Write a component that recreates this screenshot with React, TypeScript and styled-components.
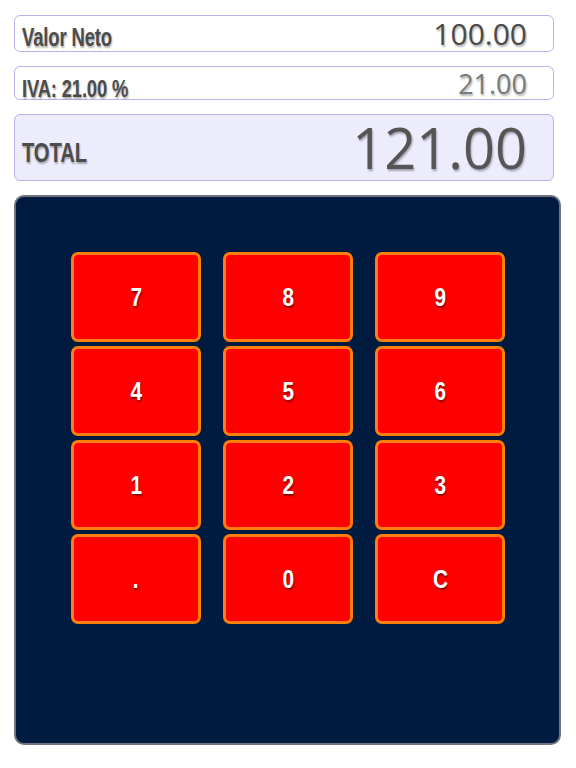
import styled, { createGlobalStyle } from "styled-components";

const GlobalStyle = createGlobalStyle`
  html, body {
    margin: 0;
    padding: 0;
    background: #ffffff;
  }
  body {
    font-family: "Liberation Sans", Arial, sans-serif;
  }
`;

const Page = styled.div`
  width: 576px;
  height: 768px;
  box-sizing: border-box;
  padding: 15px 15px 0 14px;
  display: flex;
  flex-direction: column;
`;

const Field = styled.div<{ $total?: boolean; $h: number; $mb: number }>`
  height: ${(p) => p.$h}px;
  margin-right: 7px;
  margin-bottom: ${(p) => p.$mb}px;
  box-sizing: border-box;
  border: 1px solid #b8b3ea;
  border-radius: 6px;
  background: ${(p) => (p.$total ? "#ececfd" : "#ffffff")};
  display: flex;
  align-items: flex-end;
  justify-content: space-between;
  padding: 0 26px 0 7px;
`;

// condensed bold label, squeezed from Liberation Sans
const Label = styled.div<{ $size: number; $mb: number; $scale: number }>`
  margin-bottom: ${(p) => p.$mb}px;
  font-weight: 700;
  font-size: ${(p) => p.$size}px;
  letter-spacing: -0.2px;
  color: #4c4c4c;
  text-shadow: 1px 2px 2px rgba(0, 0, 0, 0.3);
  line-height: 1;
  white-space: nowrap;
  transform: scaleX(${(p) => p.$scale});
  transform-origin: left bottom;
`;

const Value = styled.div<{ $size: number; $color: string; $mb: number }>`
  margin-bottom: ${(p) => p.$mb}px;
  font-family: "Open Sans", sans-serif;
  font-size: ${(p) => p.$size}px;
  color: ${(p) => p.$color};
  text-shadow: 1px 2px 2px rgba(0, 0, 0, 0.3);
  line-height: 1;
  white-space: nowrap;
`;

const Panel = styled.div`
  height: 550px;
  box-sizing: border-box;
  background: #001a40;
  border: 2px solid #6f7480;
  border-radius: 10px;
  padding: 55px 0 0 55px;
`;

const Keypad = styled.div`
  display: grid;
  grid-template-columns: repeat(3, 130px);
  grid-auto-rows: 90px;
  column-gap: 22px;
  row-gap: 4px;
`;

const Key = styled.button`
  box-sizing: border-box;
  border: 3px solid #ff7f0a;
  border-radius: 7px;
  background: #ff0000;
  color: #ffffff;
  font-family: "Liberation Sans", Arial, sans-serif;
  font-weight: 700;
  font-size: 26px;
  text-shadow: 1px 2px 2px rgba(0, 0, 0, 0.45);
  padding: 0;
  cursor: pointer;

  span {
    display: inline-block;
    transform: scaleX(0.8);
  }
`;

const keys = ["7", "8", "9", "4", "5", "6", "1", "2", "3", ".", "0", "C"];

export default function App() {
  return (
    <>
      <GlobalStyle />
      <Page>
        <Field $h={37} $mb={14}>
          <Label $size={25} $mb={1} $scale={0.74}>Valor Neto</Label>
          <Value $size={30} $color="#4a4a4a" $mb={2}>100.00</Value>
        </Field>
        <Field $h={34} $mb={14}>
          <Label $size={23} $mb={-2} $scale={0.8}>IVA: 21.00 %</Label>
          <Value $size={27} $color="#7a7a7a" $mb={2}>21.00</Value>
        </Field>
        <Field $total $h={67} $mb={14}>
          <Label $size={27} $mb={13} $scale={0.75}>TOTAL</Label>
          <Value $size={56} $color="#555555" $mb={5}>121.00</Value>
        </Field>
        <Panel>
          <Keypad>
            {keys.map((k) => (
              <Key key={k}>
                <span>{k}</span>
              </Key>
            ))}
          </Keypad>
        </Panel>
      </Page>
    </>
  );
}
